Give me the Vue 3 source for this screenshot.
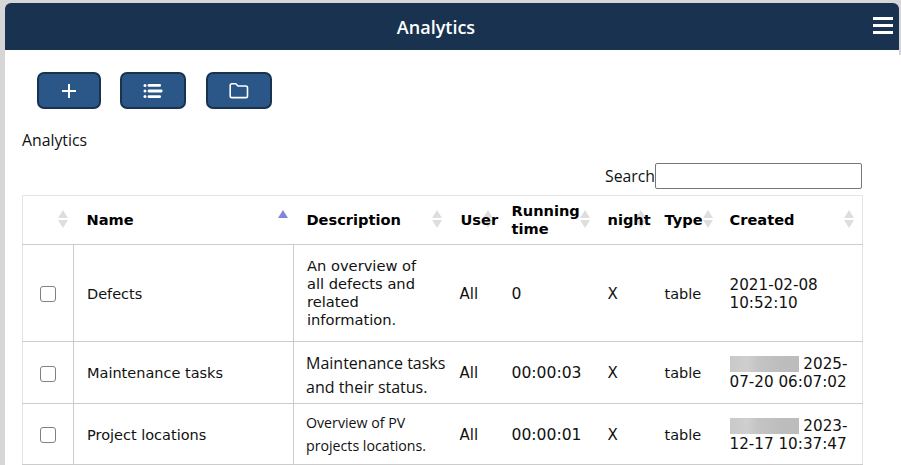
<script setup>
const rows = [
  { id: 1, name: "Defects", desc: "An overview of all defects and related information.", descClass: "", time: "0", created: "2021-02-08 10:52:10", blurred: false },
  { id: 2, name: "Maintenance tasks", desc: "Maintenance tasks and their status.", descClass: "desc--open", time: "00:00:03", created: "2025-07-20 06:07:02", blurred: true },
  { id: 3, name: "Project locations", desc: "Overview of PV projects locations.", descClass: "desc--small", time: "00:00:01", created: "2023-12-17 10:37:47", blurred: true },
];

const columns = [
  { key: "check", label: "", width: 51 },
  { key: "name", label: "Name", width: 220, sorted: true },
  { key: "desc", label: "Description", width: 160 },
  { key: "user", label: "User", width: 51 },
  { key: "time", label: "Running time", width: 96 },
  { key: "night", label: "night", width: 57 },
  { key: "type", label: "Type", width: 65 },
  { key: "created", label: "Created", width: 140 },
];
</script>

<template>
  <div class="app">
    <header class="topbar">
      <span class="topbar__title">Analytics</span>
      <button type="button" class="topbar__menu" aria-label="Menu">
        <span></span><span></span><span></span>
      </button>
    </header>

    <main class="content">
      <div class="toolbar">
        <button type="button" class="tool tool--add" aria-label="Add">
          <svg width="16" height="16" viewBox="0 0 16 16"><path d="M8 1v14M1 8h14" stroke="#fff" stroke-width="2" fill="none" /></svg>
        </button>
        <button type="button" class="tool tool--list" aria-label="List">
          <svg width="20" height="16" viewBox="0 0 20 16" fill="#fff">
            <circle cx="2" cy="2.4" r="1.5" />
            <circle cx="2" cy="8" r="1.5" />
            <circle cx="2" cy="13.6" r="1.5" />
            <rect x="4.6" y="1" width="13.4" height="2.8" rx="1.3" />
            <rect x="4.6" y="6.6" width="15" height="2.8" rx="1.3" />
            <rect x="4.6" y="12.2" width="13.4" height="2.8" rx="1.3" />
          </svg>
        </button>
        <button type="button" class="tool tool--folder" aria-label="Folder">
          <svg width="20" height="17" viewBox="0 0 20 17" fill="none">
            <path d="M1.2 3.4c0-1 .7-1.7 1.7-1.7h3.9l2.2 2.3h7.8c1 0 1.7.7 1.7 1.7v8.2c0 1-.7 1.7-1.7 1.7H2.9c-1 0-1.7-.7-1.7-1.7z" stroke="#fff" stroke-width="1.6" stroke-linejoin="round" />
          </svg>
        </button>
      </div>

      <p class="caption">Analytics</p>

      <div class="search">
        <label for="search-box">Search</label>
        <input id="search-box" type="text" class="search__input" />
      </div>

      <table class="grid">
        <colgroup>
          <col v-for="c in columns" :key="c.key" :style="{ width: c.width + 'px' }" />
        </colgroup>
        <thead>
          <tr>
            <th v-for="c in columns" :key="c.key" :class="'th--' + c.key">
              {{ c.label }}
              <span class="sort" aria-hidden="true">
                <i class="sort__up" :class="{ 'sort__up--on': c.sorted }"></i>
                <i v-if="!c.sorted" class="sort__down"></i>
              </span>
            </th>
          </tr>
        </thead>
        <tbody>
          <tr v-for="r in rows" :key="r.id">
            <td class="td--check"><span class="checkbox"></span></td>
            <td class="td--name">{{ r.name }}</td>
            <td class="td--desc" :class="r.descClass">{{ r.desc }}</td>
            <td class="td--user">All</td>
            <td class="td--time">{{ r.time }}</td>
            <td class="td--night">X</td>
            <td>table</td>
            <td class="td--created"><span v-if="r.blurred" class="redacted"></span> {{ r.created }}</td>
          </tr>
        </tbody>
      </table>
    </main>
  </div>
</template>

<style scoped>
.app {
  position: relative;
  height: 465px;
  padding-left: 5px;
  box-sizing: border-box;
  overflow: hidden;
  background: #d6d6d8;
  font-family: "DejaVu Sans", sans-serif;
  font-size: 14.5px;
  color: #111;
}

.app::after {
  content: "";
  position: absolute;
  top: 0;
  right: 0;
  width: 2px;
  height: 55px;
  background: #d6d6d8;
}

.topbar {
  position: relative;
  height: 47px;
  margin: 3px 2px 0 0;
  display: flex;
  align-items: center;
  justify-content: center;
  background: #18324f;
  border-radius: 6px 6px 0 0;
}

.topbar__title {
  font-family: "Open Sans", sans-serif;
  font-size: 18px;
  font-weight: 600;
  color: #fff;
  margin-right: 32px;
}

.topbar__menu {
  position: absolute;
  top: 14px;
  right: 6px;
  width: 20px;
  padding: 0;
  border: 0;
  background: none;
  display: flex;
  flex-direction: column;
  gap: 4px;
}

.topbar__menu span {
  display: block;
  height: 3px;
  background: #fff;
}

.content {
  height: 415px;
  background: #fff;
  padding: 22px 0 0 17px;
  box-sizing: border-box;
}

.toolbar {
  display: flex;
  gap: 19px;
  padding-left: 15px;
}

.tool {
  height: 37px;
  padding: 0;
  display: flex;
  align-items: center;
  justify-content: center;
  background: #2a5688;
  border: 2px solid #18324f;
  border-radius: 7px;
}

.tool--add {
  width: 64px;
}

.tool--list,
.tool--folder {
  width: 66px;
}

.tool--folder {
  margin-left: 1px;
}

.caption {
  margin: 22px 0 0;
  font-family: "Open Sans", sans-serif;
  font-size: 15.8px;
  line-height: 18px;
}

.search {
  width: 840px;
  margin-top: 14px;
  height: 26px;
  display: flex;
  justify-content: flex-end;
  align-items: center;
  font-family: "Open Sans", sans-serif;
  font-size: 15.8px;
}

.search__input {
  width: 207px;
  height: 26px;
  box-sizing: border-box;
  padding: 0;
  border: 1px solid #767676;
  border-radius: 2px;
  background: #fff;
}

.grid {
  width: 840px;
  margin-top: 6px;
  table-layout: fixed;
  border-collapse: collapse;
  border-top: 1px solid #e4e4e4;
  border-left: 1px solid #e4e4e4;
  border-right: 1px solid #e4e4e4;
  isolation: isolate;
}

th {
  position: relative;
  height: 49px;
  padding: 0 0 0 7px;
  box-sizing: border-box;
  text-align: left;
  font-size: 14.6px;
  font-weight: 700;
  line-height: 18px;
  border-bottom: 1px solid #cccccc;
  color: #000;
}

.th--name,
.th--desc {
  padding-left: 13px;
}

.sort {
  position: absolute;
  top: 14px;
  right: 12px;
  z-index: -1;
  display: flex;
  flex-direction: column;
  gap: 2px;
}

.sort__up,
.sort__down {
  display: block;
  width: 0;
  height: 0;
  border-left: 5px solid transparent;
  border-right: 5px solid transparent;
}

.sort__up {
  border-bottom: 8px solid #dedede;
}

.sort__up--on {
  border-bottom-color: #8085e0;
}

.sort__down {
  border-top: 8px solid #dedede;
}

.th--check .sort,
.th--name .sort {
  right: 6px;
}

.th--time .sort {
  right: 11px;
}

.th--type .sort {
  right: 10px;
}

.th--created .sort {
  right: 8px;
}

td {
  padding: 1px 0 0 7px;
  box-sizing: border-box;
  font-size: 14.5px;
  line-height: 18px;
  border-bottom: 1px solid #cccccc;
}

tbody tr:nth-child(1) {
  height: 97px;
}

tbody tr:nth-child(2) {
  height: 62px;
}

tbody tr:nth-child(3) {
  height: 61px;
}

.td--check {
  padding: 0;
  text-align: center;
  border-right: 1px solid #cccccc;
}

.checkbox {
  display: inline-block;
  vertical-align: middle;
  width: 16px;
  height: 16px;
  border: 1.5px solid #808080;
  border-radius: 3px;
  box-sizing: border-box;
}

.td--name {
  padding-left: 13px;
  border-right: 1px solid #cccccc;
}

.td--desc {
  padding: 0 25px 1px 13px;
  font-size: 14.67px;
}

.td--user {
  padding-left: 6px;
  font-size: 15px;
}

.td--time {
  font-size: 15.6px;
}

.td--night {
  font-size: 15px;
}

.td--created {
  font-size: 15.2px;
}

.desc--open {
  padding: 5px 4px 0 12px;
  font-family: "Open Sans", sans-serif;
  font-size: 16px;
  line-height: 24px;
}

.desc--small {
  padding: 0 20px 0 12px;
  font-family: "Open Sans", sans-serif;
  font-size: 14.2px;
  line-height: 23px;
}

.redacted {
  display: inline-block;
  vertical-align: -3px;
  width: 69px;
  height: 16px;
  background: linear-gradient(90deg, #c9c9c9, #cfcfcf 25%, #c4c4c4 40%, #bdbdbd 75%, #bcbcbc);
}
</style>

<style>
html,
body {
  margin: 0;
  overflow: hidden;
  background: #fff;
}
</style>
